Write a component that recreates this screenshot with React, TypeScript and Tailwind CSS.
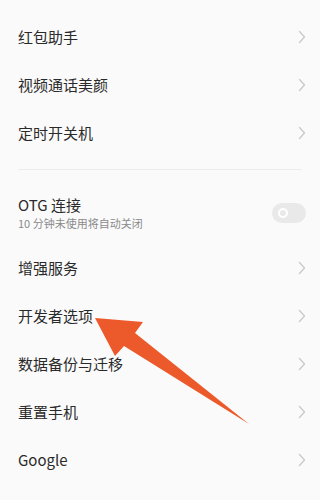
import React from "react";

const font = { fontFamily: '"Noto Sans CJK SC", "Noto Sans", sans-serif' };

function Chevron() {
  return (
    <svg width="8" height="14" viewBox="0 0 8 14" className="shrink-0">
      <path d="M1.5 1.5 L6.5 7 L1.5 12.5" fill="none" stroke="#c9c9c9" strokeWidth="1.3" strokeLinecap="round" strokeLinejoin="round" />
    </svg>
  );
}

function Row({ label }: { label: string }) {
  return (
    <div className="flex h-[48px] items-center justify-between pl-[18px] pr-[14px]">
      <span className="text-[15px] leading-5 text-[#2a2a2a]">{label}</span>
      <Chevron />
    </div>
  );
}

function Toggle() {
  return (
    <div className="flex h-[20px] w-[34px] items-center rounded-full bg-[#e9e9e9] pl-[6px]">
      <div className="h-[10px] w-[10px] rounded-full border-[2px] border-white" />
    </div>
  );
}

export default function App() {
  return (
    <div className="relative h-[500px] w-[320px] overflow-hidden bg-[#fafafa]" style={font}>
      <div className="pt-[13px]">
        <Row label="红包助手" />
        <Row label="视频通话美颜" />
        <Row label="定时开关机" />
        <div className="mx-[18px] mt-[12px] h-px bg-[#ececec]" />
        <div className="flex h-[74px] items-center justify-between pl-[18px] pr-[14px] pt-[12px]">
          <div className="flex flex-col">
            <span className="text-[15px] leading-5 text-[#2a2a2a]">OTG 连接</span>
            <span className="text-[11px] leading-[16px] text-[#8a8a8a]">10 分钟未使用将自动关闭</span>
          </div>
          <Toggle />
        </div>
        <Row label="增强服务" />
        <Row label="开发者选项" />
        <Row label="数据备份与迁移" />
        <Row label="重置手机" />
        <Row label="Google" />
      </div>
      <svg className="pointer-events-none absolute left-0 top-0" width="320" height="500" viewBox="0 0 320 500">
        <polygon points="95,318 143,322 135,333 249,424 124,346 115,356" fill="#ec5a2b" />
      </svg>
    </div>
  );
}
